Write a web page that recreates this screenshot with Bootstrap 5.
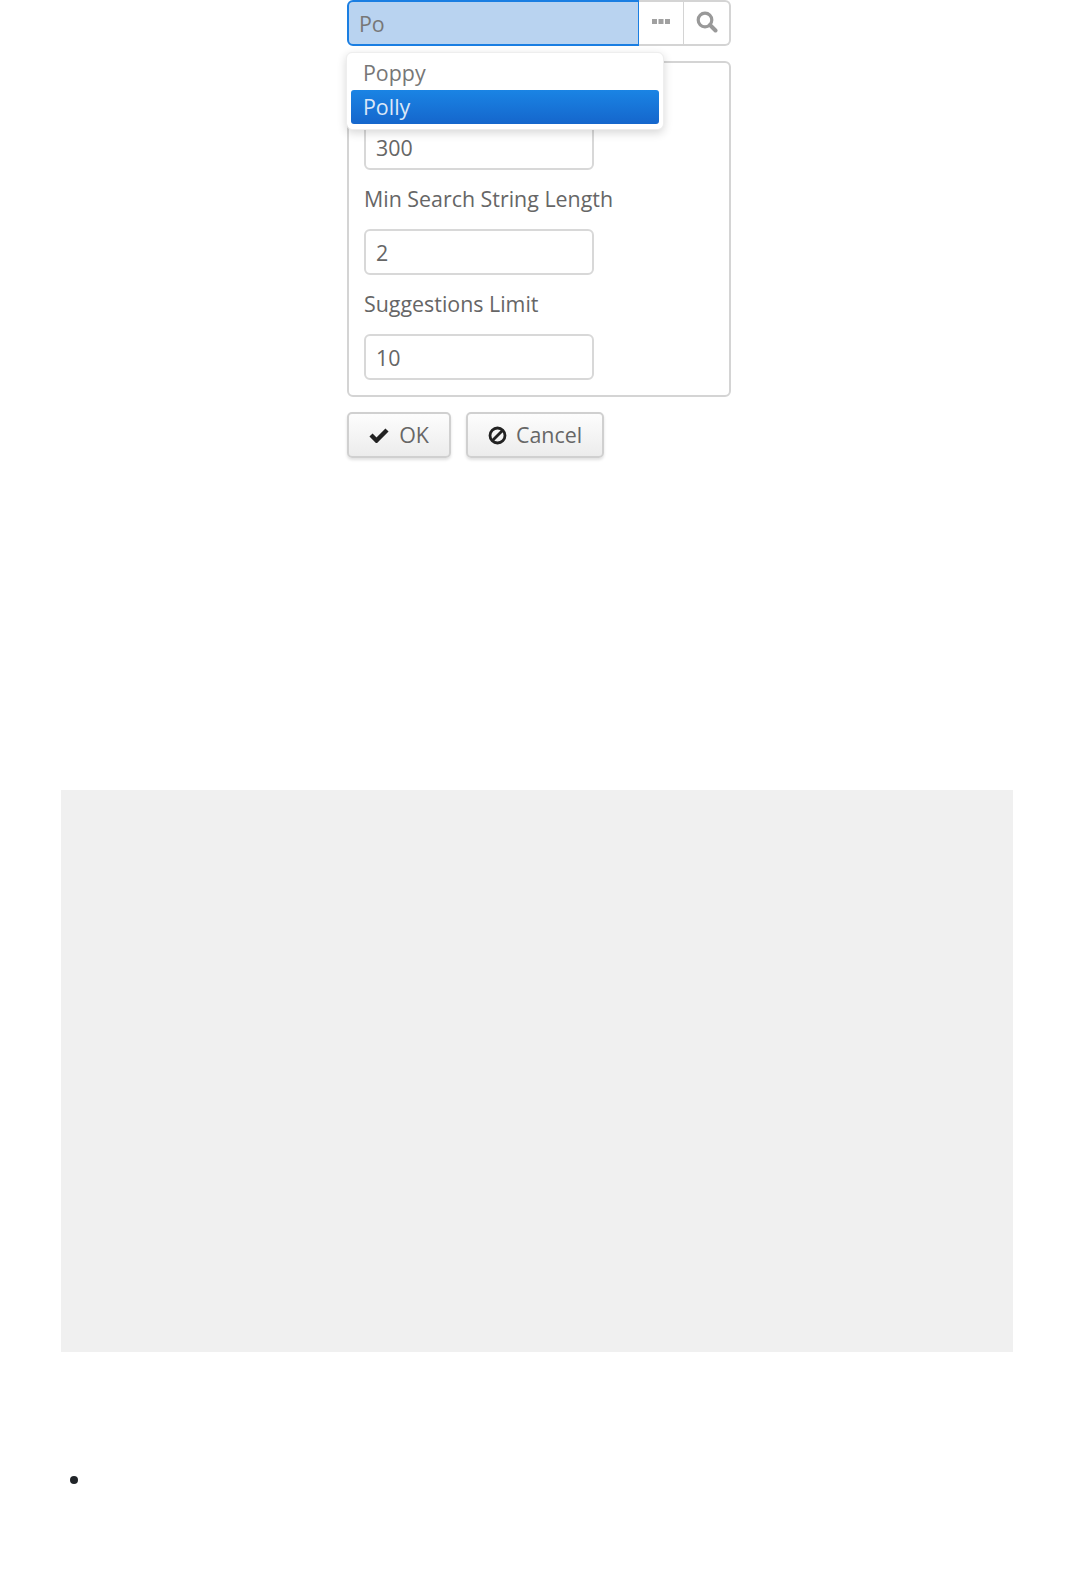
<!DOCTYPE html>
<html>
<head>
  <meta charset="UTF-8">
  <title>Autocomplete settings</title>
  <meta name="viewport" content="width=device-width, initial-scale=1">
  <link href="https://cdn.jsdelivr.net/npm/bootstrap@5.3.0/dist/css/bootstrap.min.css" rel="stylesheet">
  <style>
    body { font-family: "Open Sans", sans-serif; font-size: 21.4px; color: #666; background: #fff; }
    .page-wrap { padding: 0 62px 0 61px; }
    .widget { width: 384px; margin-left: 286px; }
    .search-group { height: 46px; }
    .search-group .form-control { background: #b9d3f0; border: 2px solid #1a7ee2; border-radius: 6px 0 0 6px; color: #777; font-size: 21.4px; padding: 0 10px; height: 46px; box-shadow: none; }
    .addon-btn { width: 46px; height: 46px; padding: 0 0 3px; background: #fff; border: 2px solid #d4d4d4; border-left: 0; color: #999; }
    .addon-btn:last-child { width: 47px; border-radius: 0 6px 6px 0; }
    .suggest-menu { top: 52px; left: -1px; width: 318px; min-width: 0; padding: 3px 4px 5px; border: 1px solid #eee; border-radius: 6px; box-shadow: 0 3px 10px rgba(0,0,0,.16); font-size: 21.4px; z-index: 5; }
    .suggest-menu .dropdown-item { color: #777; padding: 0 12px; height: 34px; line-height: 34px; border-radius: 3px; }
    .suggest-menu .dropdown-item.active { color: #dbe8f8; background: linear-gradient(#1a84e4, #1566cc); }
    .settings-panel { margin-top: 15px; border: 2px solid #d4d4d4; border-radius: 6px; padding: 2px 16px 15px 15px; }
    .settings-panel label { display: block; height: 59px; line-height: 57px; margin: 0; white-space: nowrap; }
    .settings-panel .form-control { width: 230px; height: 46px; border: 2px solid #d8d8d8; border-radius: 6px; color: #666; font-size: 21.4px; padding: 0 10px; box-shadow: none; }
    .button-row { margin-top: 15px; gap: 15px; }
    .action-btn { height: 46px; padding: 0; color: #666; font-size: 21.4px; background: linear-gradient(#fdfdfd, #ececec); border: 2px solid #d0d0d0; border-radius: 5px; box-shadow: 0 2px 3px rgba(0,0,0,.12); gap: 10px; }
    .ok-btn { width: 104px; }
    .cancel-btn { width: 138px; gap: 9px; }
    .grey-block { height: 562px; margin-top: 332px; background: #f0f0f0; }
    .empty-list { margin: 111px 0 0; padding-left: 31px; font-size: 21.4px; color: #212529; }
  </style>
</head>
<body>
  <div class="page-wrap">
    <div class="widget position-relative">
      <div class="input-group search-group">
        <input type="text" class="form-control" value="Po">
        <button class="btn addon-btn d-flex align-items-center justify-content-center" type="button">
          <svg width="18" height="6" viewBox="0 0 18 6"><path fill="#a0a0a0" d="M0 0h5v5H0zM6.500 0h5v5h-5zM13 0h5v5h-5z"/></svg>
        </button>
        <button class="btn addon-btn d-flex align-items-center justify-content-center" type="button">
          <svg width="22" height="22" viewBox="0 0 22 22"><circle cx="9" cy="9" r="6.800" fill="none" stroke="#999" stroke-width="3.200"/><path d="M14 14l5.500 5.500" stroke="#999" stroke-width="4" stroke-linecap="round"/></svg>
        </button>
      </div>

      <ul class="dropdown-menu show position-absolute suggest-menu">
        <li><a class="dropdown-item" href="#">Poppy</a></li>
        <li><a class="dropdown-item active" href="#">Polly</a></li>
      </ul>

      <div class="settings-panel">
        <label></label>
        <input type="text" class="form-control" value="300">
        <label>Min Search String Length</label>
        <input type="text" class="form-control" value="2">
        <label>Suggestions Limit</label>
        <input type="text" class="form-control" value="10">
      </div>

      <div class="d-flex button-row">
        <button class="btn action-btn ok-btn d-flex align-items-center justify-content-center" type="button">
          <svg width="20" height="16" viewBox="0 0 20 16"><path d="M2 8l5.500 5.500L18 3" fill="none" stroke="#222" stroke-width="4.400"/></svg>OK
        </button>
        <button class="btn action-btn cancel-btn d-flex align-items-center justify-content-center" type="button">
          <svg width="19" height="19" viewBox="0 0 19 19"><circle cx="9.500" cy="9.500" r="7.500" fill="none" stroke="#222" stroke-width="2.800"/><path d="M4.500 14.500l10-10" stroke="#222" stroke-width="2.800"/></svg>Cancel
        </button>
      </div>
    </div>

    <div class="grey-block"></div>

    <ul class="empty-list">
      <li>&nbsp;</li>
    </ul>
  </div>

  <script src="https://cdn.jsdelivr.net/npm/bootstrap@5.3.0/dist/js/bootstrap.bundle.min.js"></script>
</body>
</html>
